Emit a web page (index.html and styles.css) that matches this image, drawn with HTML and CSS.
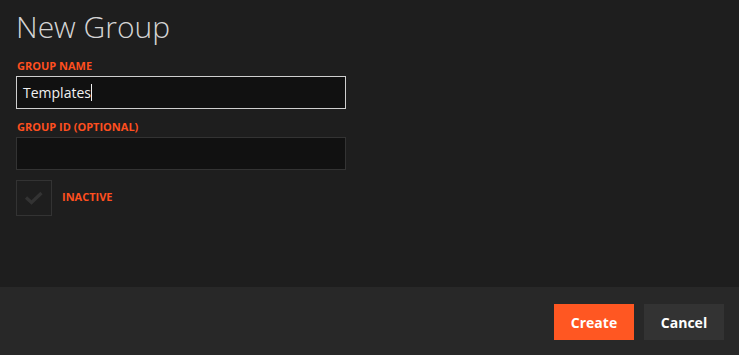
FILE: index.html
```html
<!DOCTYPE html>
<html>
<head>
<meta charset="utf-8">
<link rel="stylesheet" href="styles.css">
</head>
<body>
<div class="dialog">
  <div class="content">
    <h1 class="title">New Group</h1>
    <label class="label">GROUP NAME</label>
    <div class="input focused"><span class="value">Templates</span><span class="caret"></span></div>
    <label class="label second">GROUP ID (OPTIONAL)</label>
    <div class="input"></div>
    <div class="check-row">
      <div class="checkbox">
        <svg width="20" height="14" viewBox="0 0 20 14"><path d="M2 6.5 L7.5 11.5 L17.5 2" fill="none" stroke="#333" stroke-width="3.2"/></svg>
      </div>
      <span class="check-label">INACTIVE</span>
    </div>
  </div>
  <div class="footer">
    <button class="btn primary">Create</button>
    <button class="btn secondary">Cancel</button>
  </div>
</div>
</body>
</html>
```
FILE: styles.css
```css
html, body {
  margin: 0;
  padding: 0;
  background: #1e1e1e;
  font-family: "Open Sans", "Noto Sans", sans-serif;
}
.dialog {
  height: 355px;
  display: flex;
  flex-direction: column;
}
.content {
  flex: 1;
  padding: 7px 16px 0 16px;
  display: flex;
  flex-direction: column;
  align-items: flex-start;
}
.title {
  margin: 0;
  font-size: 30px;
  font-weight: 300;
  line-height: 40px;
  color: #d4d4d4;
}
.label {
  display: block;
  margin-top: 12px;
  font-size: 11px;
  font-weight: 700;
  line-height: 14px;
  color: #ff4f1f;
  margin-bottom: 3px;
  padding-left: 1px;
}
.label.second {
  margin-top: 11px;
}
.input {
  box-sizing: border-box;
  width: 330px;
  height: 33px;
  background: #111;
  border: 1px solid #333;
  display: flex;
  align-items: center;
  padding-left: 6px;
  color: #f0f0f0;
  font-size: 14px;
}
.input.focused {
  border-color: #cfcfcf;
}
.caret {
  display: inline-block;
  width: 1px;
  height: 17px;
  background: #f0f0f0;
}
.check-row {
  margin-top: 10px;
  display: flex;
  align-items: center;
  gap: 10px;
}
.checkbox {
  box-sizing: border-box;
  width: 36px;
  height: 36px;
  border: 1px solid #333;
  display: flex;
  align-items: center;
  justify-content: center;
}
.check-label {
  font-size: 11px;
  font-weight: 700;
  color: #ff4f1f;
  padding-bottom: 3px;
}
.footer {
  height: 68px;
  background: #282828;
  display: flex;
  justify-content: flex-end;
  align-items: flex-start;
  padding: 17px 15px 0 0;
  box-sizing: border-box;
  gap: 10px;
}
.btn {
  width: 80px;
  height: 36px;
  border: none;
  font-family: "Open Sans", "Noto Sans", sans-serif;
  font-size: 14px;
  font-weight: 700;
  color: #fff;
  padding: 0;
}
.primary {
  background: #ff5722;
}
.secondary {
  background: #333;
}
```
